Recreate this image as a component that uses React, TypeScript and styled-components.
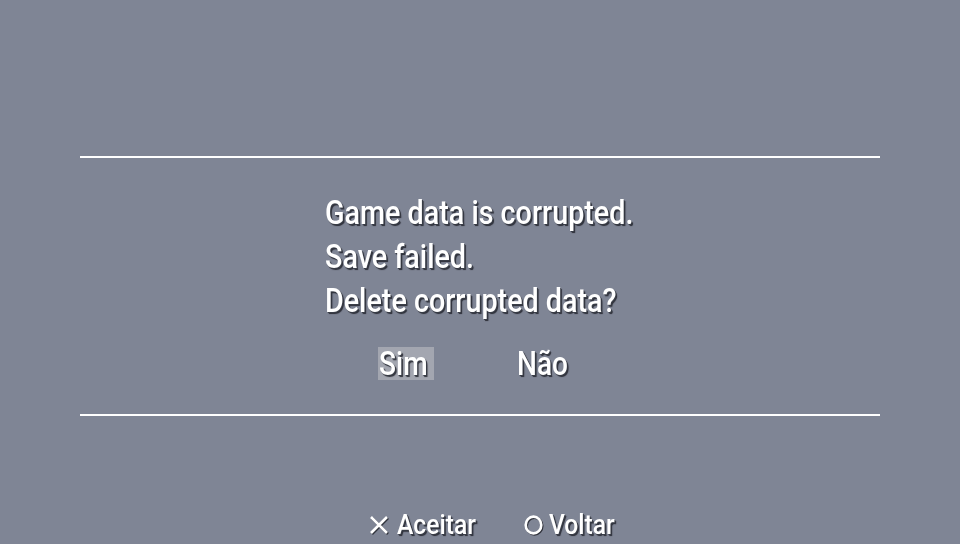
import React from "react";
import styled, { createGlobalStyle } from "styled-components";

const GlobalStyle = createGlobalStyle`
  html, body {
    margin: 0;
    padding: 0;
    background: #7f8595;
  }
  body {
    font-family: Roboto, "Noto Sans", sans-serif;
    color: #ffffff;
  }
`;

const Screen = styled.div`
  width: 960px;
  height: 544px;
  background: #7f8595;
  display: flex;
  flex-direction: column;
  align-items: center;
  overflow: hidden;
`;

const Dialog = styled.section`
  margin-top: 156px;
  width: 800px;
  height: 256px;
  border-top: 2px solid #ffffff;
  border-bottom: 2px solid #ffffff;
  display: flex;
  flex-direction: column;
  align-items: center;
`;

const shadow = `1px 1px 0 #3a3e48, 2px 2px 1px rgba(30, 32, 40, 0.85)`;

const Message = styled.div`
  margin-top: 33px;
  width: 310px;
  display: flex;
  flex-direction: column;
`;

const Line = styled.div`
  height: 44px;
  font-size: 33px;
  font-weight: 500;
  line-height: 44px;
  white-space: nowrap;
  text-shadow: ${shadow};
  transform: scaleX(0.87);
  transform-origin: left center;
`;

const Choices = styled.div`
  margin-top: 24px;
  display: flex;
  gap: 82px;
  margin-left: -10px;
`;

const Choice = styled.div<{ $selected?: boolean }>`
  width: 55px;
  height: 33px;
  font-size: 33px;
  font-weight: 500;
  line-height: 33px;
  padding-left: 1px;
  background: ${(p) => (p.$selected ? "#a3a6b0" : "transparent")};
  text-shadow: ${shadow};
  white-space: nowrap;
  span {
    display: inline-block;
    transform: scaleX(0.85);
    transform-origin: left center;
  }
`;

const Footer = styled.footer`
  margin-top: 94px;
  display: flex;
  gap: 48px;
  margin-left: 24px;
`;

const Hint = styled.div<{ $gap: number }>`
  display: flex;
  align-items: center;
  gap: ${(p) => p.$gap}px;
  font-size: 28px;
  font-weight: 500;
  line-height: 30px;
  text-shadow: ${shadow};
  white-space: nowrap;
  svg {
    flex-shrink: 0;
    filter: drop-shadow(1.5px 1.5px 0.5px rgba(40, 42, 50, 0.9));
  }
`;

const HintLabel = styled.span<{ $trim: number }>`
  display: inline-block;
  transform: scaleX(0.88);
  transform-origin: left center;
  margin-right: -${(p) => p.$trim}px;
`;

const Cross = () => (
  <svg width="20" height="20" viewBox="0 0 20 20">
    <path d="M2 2 L18 18 M18 2 L2 18" stroke="#fff" strokeWidth="2.6" />
  </svg>
);

const Circle = () => (
  <svg width="19" height="20" viewBox="0 0 19 20">
    <ellipse cx="9.5" cy="10" rx="7.8" ry="8.4" stroke="#fff" strokeWidth="2.6" fill="none" />
  </svg>
);

export default function App() {
  return (
    <>
      <GlobalStyle />
      <Screen>
        <Dialog>
          <Message>
            <Line>Game data is corrupted.</Line>
            <Line>Save failed.</Line>
            <Line>Delete corrupted data?</Line>
          </Message>
          <Choices>
            <Choice $selected>
              <span>Sim</span>
            </Choice>
            <Choice>
              <span>Não</span>
            </Choice>
          </Choices>
        </Dialog>
        <Footer>
          <Hint $gap={8}>
            <Cross />
            <HintLabel $trim={11}>Aceitar</HintLabel>
          </Hint>
          <Hint $gap={6}>
            <Circle />
            <HintLabel $trim={9}>Voltar</HintLabel>
          </Hint>
        </Footer>
      </Screen>
    </>
  );
}
